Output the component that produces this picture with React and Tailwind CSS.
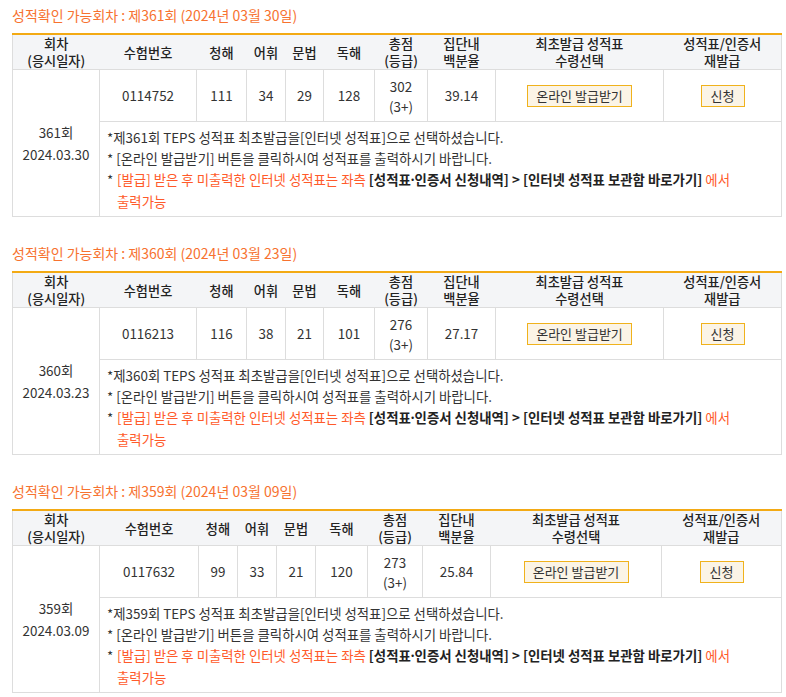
const WIDE = ["w-[87px]", "w-[97px]", "w-[50px]", "w-[39px]", "w-[38px]", "w-[51px]", "w-[53px]", "w-[68px]", "w-[168px]", "w-[118px]"];
const NARROW = ["w-[87px]", "w-[99px]", "w-[39px]", "w-[39px]", "w-[39px]", "w-[52px]", "w-[55px]", "w-[68px]", "w-[171px]", "w-[120px]"];

const ROUNDS = [
  { no: 361, date: "2024년 03월 30일", day: "2024.03.30", exam: "0114752", l: 111, v: 34, g: 29, r: 128, total: 302, grade: "3+", pct: "39.14", cols: WIDE },
  { no: 360, date: "2024년 03월 23일", day: "2024.03.23", exam: "0116213", l: 116, v: 38, g: 21, r: 101, total: 276, grade: "3+", pct: "27.17", cols: WIDE },
  { no: 359, date: "2024년 03월 09일", day: "2024.03.09", exam: "0117632", l: 99, v: 33, g: 21, r: 120, total: 273, grade: "3+", pct: "25.84", cols: NARROW },
];

const HEADS = [
  ["회차", "(응시일자)"],
  ["수험번호"],
  ["청해"],
  ["어휘"],
  ["문법"],
  ["독해"],
  ["총점", "(등급)"],
  ["집단내", "백분율"],
  ["최초발급 성적표", "수령선택"],
  ["성적표/인증서", "재발급"],
];

const td = "border border-[#dddddd] text-center align-middle";

function ScoreTable({ d }) {
  return (
    <section className="mb-[27px]">
      <h3 className="h-[18px] text-[14px] leading-[18px] font-normal text-[#f7722f] mb-[9px]">
        성적확인 가능회차 : 제{d.no}회 ({d.date})
      </h3>
      <table className="w-[769px] table-fixed border-collapse border border-[#dddddd] text-[13.4px] text-[#333333]">
        <colgroup>
          {d.cols.map((c, i) => (
            <col key={i} className={c} />
          ))}
        </colgroup>
        <thead>
          <tr className="border-t-2 border-t-[#f3aa14] bg-[#f4f5f7]">
            {HEADS.map((h, i) => (
              <th key={i} className="h-[35px] border-b border-[#dddddd] p-0 text-center align-middle text-[13.2px] font-medium leading-[17px] text-[#222222]">
                {h.map((t) => (
                  <div key={t}>{t}</div>
                ))}
              </th>
            ))}
          </tr>
        </thead>
        <tbody>
          <tr className="h-[52px]">
            <td rowSpan={2} className={td + " leading-[22px]"}>
              <div>{d.no}회</div>
              <div>{d.day}</div>
            </td>
            <td className={td}>{d.exam}</td>
            <td className={td}>{d.l}</td>
            <td className={td}>{d.v}</td>
            <td className={td}>{d.g}</td>
            <td className={td}>{d.r}</td>
            <td className={td + " leading-[20px]"}>
              <div>{d.total}</div>
              <div>({d.grade})</div>
            </td>
            <td className={td}>{d.pct}</td>
            <td className={td}>
              <button className="inline-flex h-[22px] w-[105px] items-center justify-center border border-[#f0b21c] bg-[#fbf4e6] text-[13px] text-[#333333]">
                온라인 발급받기
              </button>
            </td>
            <td className={td}>
              <button className="inline-flex h-[22px] w-[44px] items-center justify-center border border-[#f0b21c] bg-[#fbf4e6] text-[13px] text-[#333333]">
                신청
              </button>
            </td>
          </tr>
          <tr>
            <td colSpan={9} className="break-keep border border-[#dddddd] px-[7px] pt-[5px] pb-[4px] text-left leading-[21px]">
              <div>*제{d.no}회 TEPS 성적표 최초발급을[인터넷 성적표]으로 선택하셨습니다.</div>
              <div>* [온라인 발급받기] 버튼을 클릭하시여 성적표를 출력하시기 바랍니다.</div>
              <div className="flex">
                <span className="w-[10px] shrink-0">*</span>
                <span className="text-[#ff5a2a]">
                  [발급] 받은 후 미출력한 인터넷 성적표는 좌측{" "}
                  <b className="font-bold text-[#222222]">
                    [성적표<span className="font-['Noto_Sans']">·</span>인증서 신청내역] &gt; [인터넷 성적표 보관함 바로가기]
                  </b>{" "}
                  에서 출력가능
                </span>
              </div>
            </td>
          </tr>
        </tbody>
      </table>
    </section>
  );
}

export default function App() {
  return (
    <div className="min-h-[697px] bg-white pl-[12px] pt-[6px]" style={{ fontFamily: '"Noto Sans CJK KR", "Noto Sans", sans-serif' }}>
      {ROUNDS.map((d) => (
        <ScoreTable key={d.no} d={d} />
      ))}
    </div>
  );
}
